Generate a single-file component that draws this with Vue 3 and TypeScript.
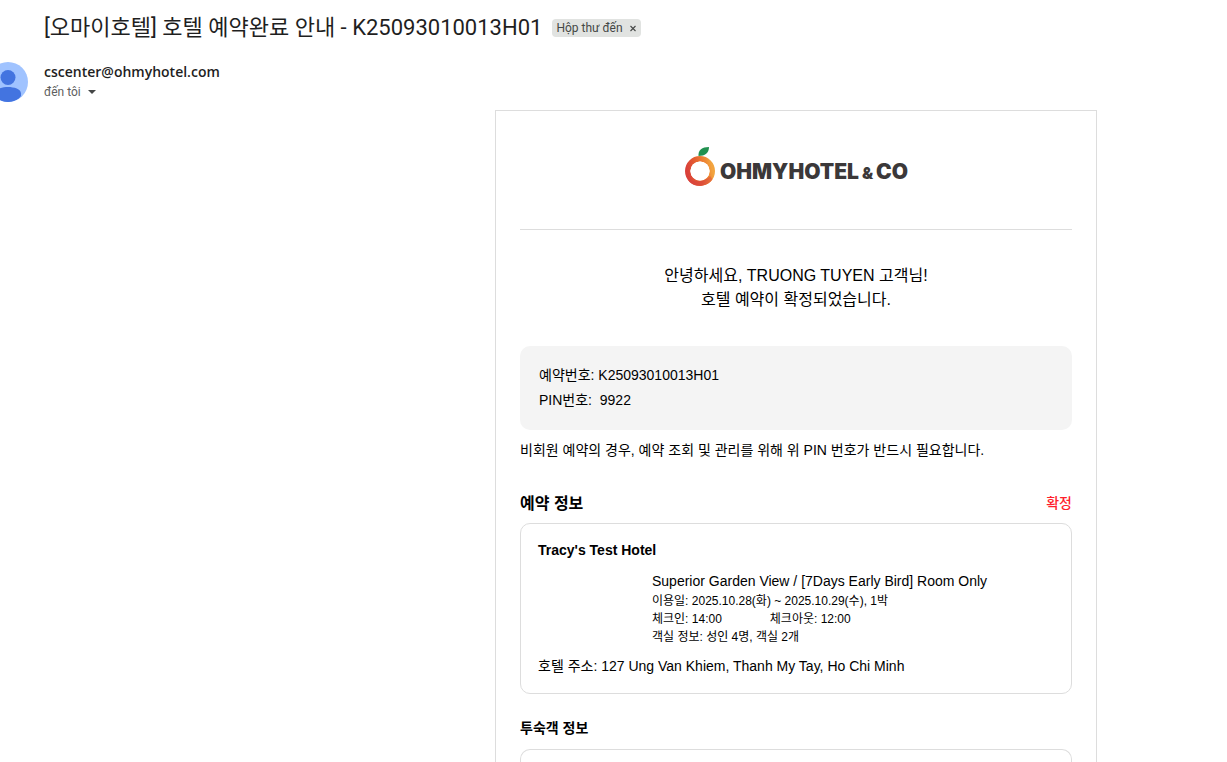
<script setup lang="ts">
import { ref } from 'vue'

interface Booking {
  number: string
  pin: string
  guest: string
  hotel: string
  room: string
  stay: string
  checkIn: string
  checkOut: string
  occupancy: string
  address: string
}

const booking: Booking = {
  number: 'K25093010013H01',
  pin: '9922',
  guest: 'TRUONG TUYEN',
  hotel: "Tracy's Test Hotel",
  room: 'Superior Garden View / [7Days Early Bird] Room Only',
  stay: '2025.10.28(화) ~ 2025.10.29(수), 1박',
  checkIn: '14:00',
  checkOut: '12:00',
  occupancy: '성인 4명, 객실 2개',
  address: '127 Ung Van Khiem, Thanh My Tay, Ho Chi Minh',
}

const labelled = ref(true)
</script>

<template>
  <main class="mail">
    <header class="subject">
      <h1>[오마이호텔] 호텔 예약완료 안내 - {{ booking.number }}</h1>
      <span v-if="labelled" class="chip">
        Hộp thư đến
        <button type="button" aria-label="Xóa nhãn" @click="labelled = false">
          <svg width="8" height="8" viewBox="0 0 8 8" aria-hidden="true">
            <path d="M1.500 2 6.500 7M6.500 2 1.500 7" stroke="#444746" stroke-width="1.1" />
          </svg>
        </button>
      </span>
    </header>

    <section class="sender">
      <svg class="avatar" width="40" height="40" viewBox="0 0 40 40" aria-hidden="true">
        <defs>
          <clipPath id="avatar-clip"><circle cx="20" cy="20" r="20" /></clipPath>
        </defs>
        <circle cx="20" cy="20" r="20" fill="#a0c3ff" />
        <g fill="#4374e0" clip-path="url(#avatar-clip)">
          <circle cx="20" cy="15.5" r="7.5" />
          <path d="M7 34V31.5C7 27 14 25 20 25S33 27 33 31.5V34C30 38 25 40 20 40S10 38 7 34Z" />
        </g>
      </svg>
      <div>
        <p class="address">cscenter@ohmyhotel.com</p>
        <button type="button" class="recipient">
          đến tôi
          <svg width="8" height="4" viewBox="0 0 8 4" aria-hidden="true">
            <path d="M0 0H8L4 4Z" fill="#444746" />
          </svg>
        </button>
      </div>
    </section>

    <div class="body">
      <article class="letter">
        <div class="brand">
          <svg width="32" height="42" viewBox="0 0 32 42" aria-hidden="true">
            <defs>
              <linearGradient id="ring" x1="0" y1="0.6" x2="1" y2="0.4">
                <stop offset="0" stop-color="#d9403a" />
                <stop offset="0.4" stop-color="#e5602f" />
                <stop offset="0.8" stop-color="#ee8a35" />
                <stop offset="1" stop-color="#f2a43f" />
              </linearGradient>
              <linearGradient id="ring-base" x1="0" y1="0" x2="1" y2="0">
                <stop offset="0" stop-color="#d9403a" />
                <stop offset="0.6" stop-color="#dd4f39" />
                <stop offset="1" stop-color="#e8763a" />
              </linearGradient>
            </defs>
            <circle cx="16" cy="26" r="12.3" fill="none" stroke="url(#ring)" stroke-width="5.4" />
            <path d="M5 34C9 37 20 38 26 31L28.500 34.300C24 42 9 44 3.500 34.300Z" fill="url(#ring-base)" />
            <circle cx="16" cy="26" r="9.6" fill="#fff" />
            <path d="M14.500 11C14 5 18 2 25 2C25 8 21 11 14.500 11Z" fill="#219150" />
          </svg>
          <span class="wordmark">OHMYHOTEL<small>&amp;</small>CO</span>
        </div>

        <p class="greeting">안녕하세요, {{ booking.guest }} 고객님!<br />호텔 예약이 확정되었습니다.</p>

        <div class="codes">
          <p>예약번호: {{ booking.number }}</p>
          <p>PIN번호: &nbsp;{{ booking.pin }}</p>
        </div>
        <p class="note">비회원 예약의 경우, 예약 조회 및 관리를 위해 위 PIN 번호가 반드시 필요합니다.</p>

        <div class="heading">
          <h2>예약 정보</h2>
          <strong>확정</strong>
        </div>
        <section class="panel">
          <h3>{{ booking.hotel }}</h3>
          <div class="details">
            <p class="room">{{ booking.room }}</p>
            <p>이용일: {{ booking.stay }}</p>
            <p class="times">
              <span>체크인: {{ booking.checkIn }}</span>
              <span>체크아웃: {{ booking.checkOut }}</span>
            </p>
            <p>객실 정보: {{ booking.occupancy }}</p>
          </div>
          <p class="location">호텔 주소: {{ booking.address }}</p>
        </section>

        <h2 class="guests">투숙객 정보</h2>
        <section class="panel open"></section>
      </article>
    </div>
  </main>
</template>

<style>
body {
  margin: 0;
  background: #fff;
}
</style>

<style scoped>
h1,
h2,
h3,
p {
  margin: 0;
}

button {
  padding: 0;
  border: 0;
  background: none;
  font: inherit;
  color: inherit;
  cursor: pointer;
}

.mail {
  display: flex;
  flex-direction: column;
  box-sizing: border-box;
  height: 100vh;
  padding-left: 44px;
  overflow: hidden;
  font-family: Roboto, "Noto Sans CJK KR", sans-serif;
  color: #1f1f1f;
}

.subject {
  display: flex;
  align-items: center;
  gap: 10px;
  padding-top: 12px;
}

h1 {
  font-size: 22px;
  font-weight: 400;
  line-height: 32px;
}

.chip {
  display: flex;
  align-items: center;
  gap: 6px;
  padding: 0 4px;
  border-radius: 4px;
  background: #e1e3e1;
  font-size: 12px;
  line-height: 18px;
  color: #444746;
}

.chip button {
  display: flex;
}

.sender {
  display: flex;
  gap: 16px;
  margin: 18px 0 8px -56px;
}

.avatar {
  flex: none;
}

.address {
  font-family: "Open Sans", sans-serif;
  font-size: 14px;
  font-weight: 600;
  line-height: 20px;
}

.recipient {
  display: flex;
  align-items: center;
  gap: 7px;
  font-size: 12px;
  line-height: 20px;
  color: #5e5e5e;
}

.body {
  display: grid;
  flex: 1;
  grid-template-columns: minmax(0, 451fr) minmax(0, 602px) minmax(0, 130fr);
}

.letter {
  grid-column: 2;
  display: flex;
  flex-direction: column;
  padding: 0 24px;
  border: 1px solid #ddd;
  border-bottom: 0;
  font-family: "Liberation Sans", "Noto Sans CJK KR", sans-serif;
  font-size: 14px;
  color: #000;
}

.brand {
  display: flex;
  justify-content: center;
  align-items: flex-start;
  gap: 4px;
  padding: 34px 0 42px;
  border-bottom: 1px solid #ddd;
}

.wordmark {
  padding-top: 14px;
  font-family: Inter, sans-serif;
  font-size: 21px;
  font-weight: 900;
  line-height: 26px;
  color: #3b3839;
}

.wordmark small {
  margin: 0 3px;
  font-size: 16px;
}

.greeting {
  padding: 34px 0;
  font-size: 16px;
  line-height: 24px;
  text-align: center;
}

.codes {
  padding: 17px 19px;
  border-radius: 10px;
  background: #f4f4f4;
  line-height: 25px;
}

.note {
  margin-top: 8px;
  line-height: 24px;
}

.heading {
  display: flex;
  justify-content: space-between;
  align-items: flex-start;
  margin: 30px 0 7px;
}

h2 {
  font-size: 16px;
  line-height: 24px;
}

.heading strong {
  font-weight: 500;
  line-height: 22px;
  color: #ff1f2d;
}

.panel {
  padding: 16px 17px 15px;
  border: 1px solid #ddd;
  border-radius: 10px;
}

h3 {
  font-size: 14px;
  line-height: 20px;
}

.details {
  margin: 11px 0 8px 114px;
  font-size: 12px;
  line-height: 18px;
}

.room {
  margin-bottom: 1px;
  font-size: 14px;
  line-height: 20px;
}

.times {
  display: flex;
  gap: 48px;
}

.location {
  line-height: 24px;
}

.guests {
  margin: 22px 0 9px;
  font-size: 14px;
}

.open {
  flex: 1;
  padding: 0;
  border-bottom: 0;
  border-radius: 10px 10px 0 0;
}
</style>
